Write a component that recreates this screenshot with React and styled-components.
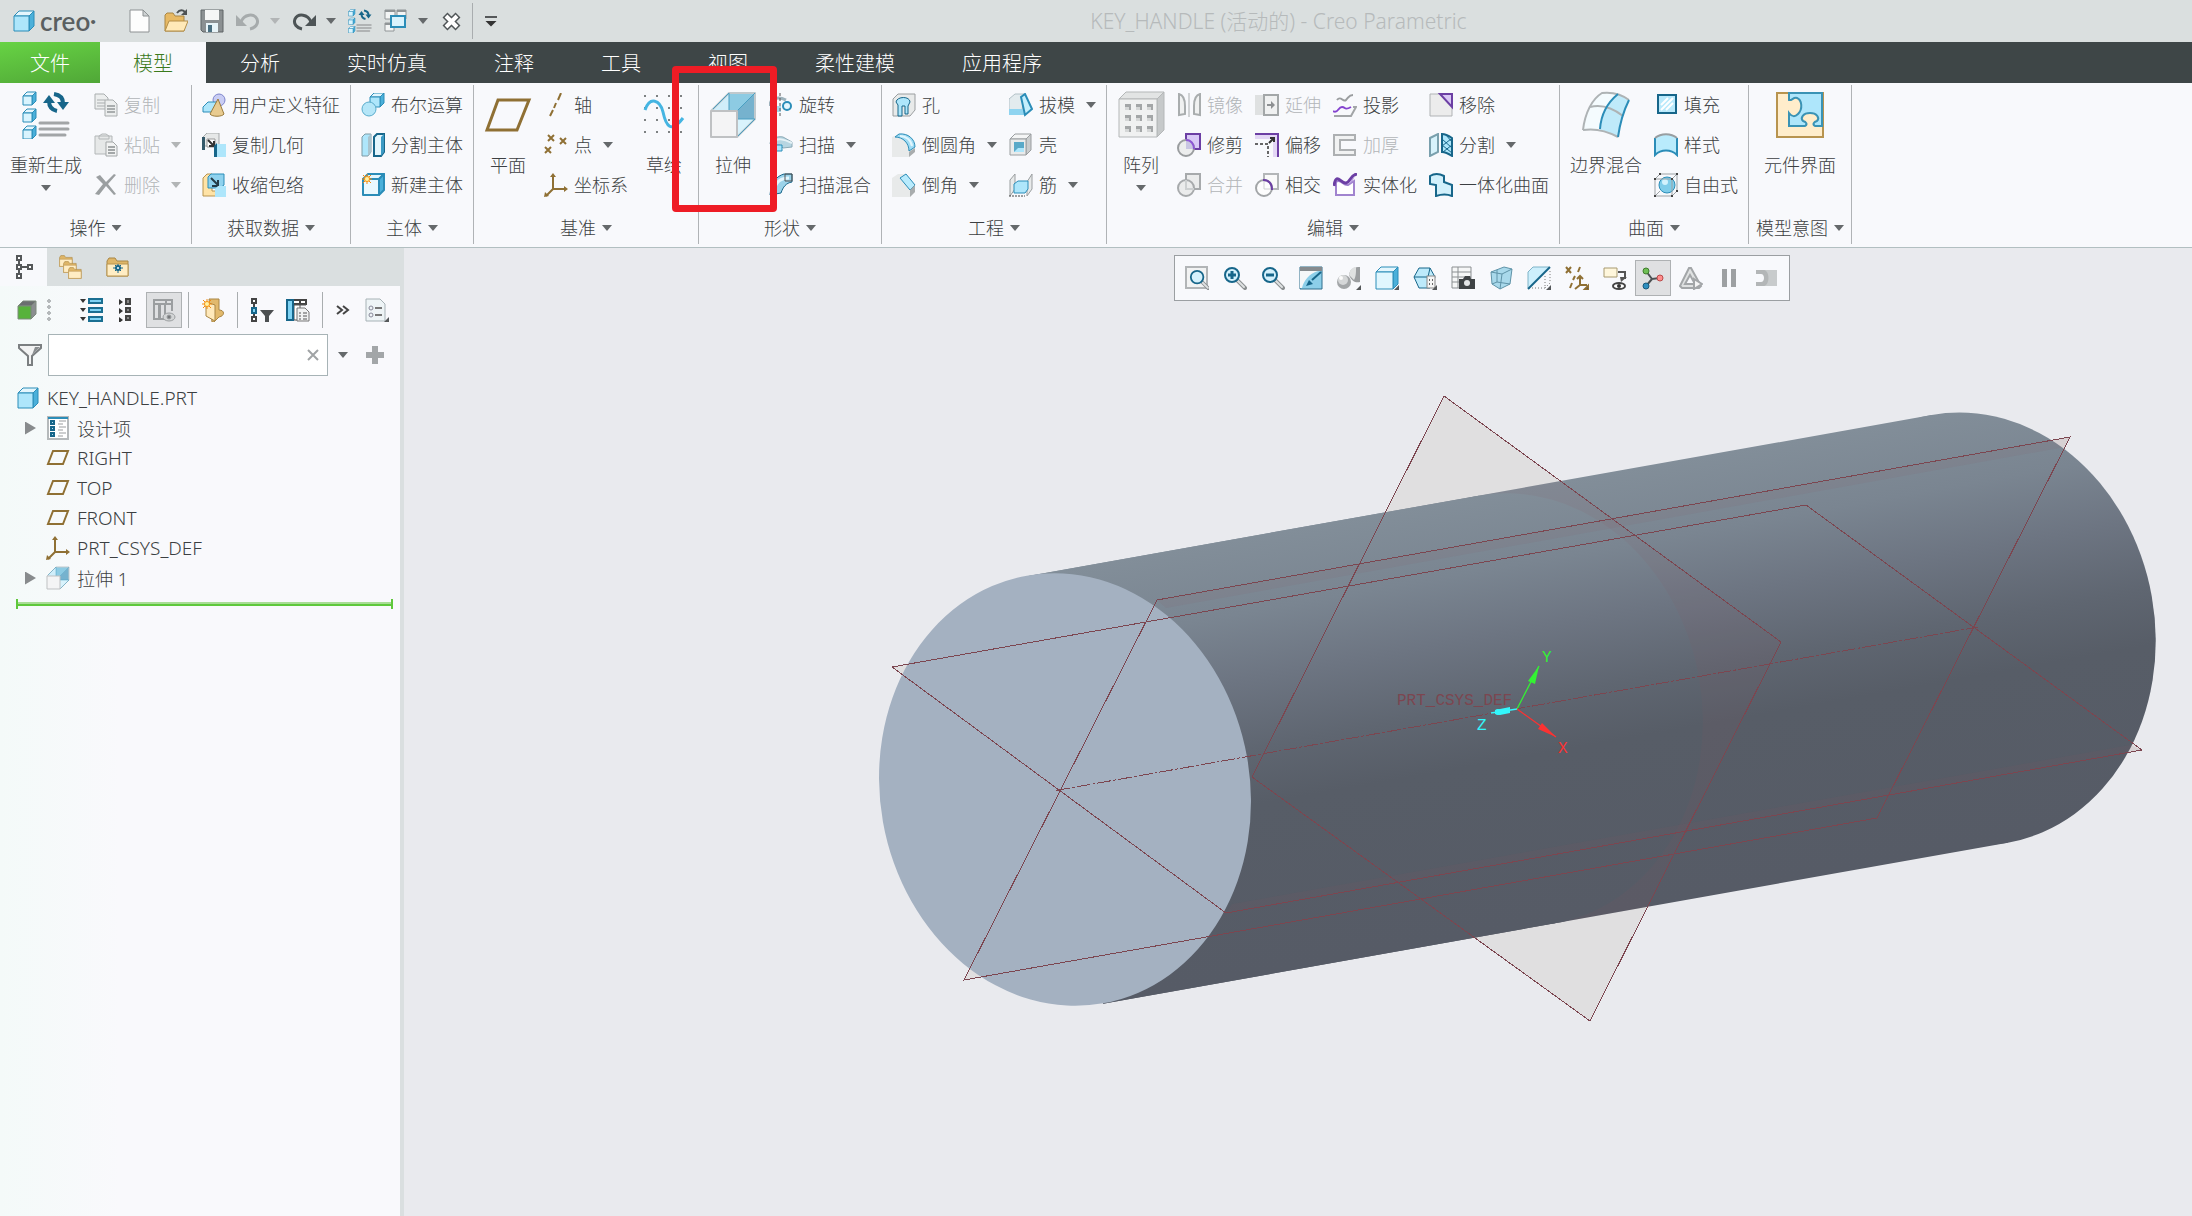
import styled, { createGlobalStyle, css } from "styled-components"
import { useState } from "react"

const GlobalStyle = createGlobalStyle`
    * {
        box-sizing: border-box;
    }
    body {
        margin: 0;
        font-family: "Noto Sans", "Noto Sans CJK SC", sans-serif;
        font-weight: 300;
        font-size: 18px;
        color: #3c3f42;
        background: #e9eaee;
    }
    button, input {
        font: inherit;
        color: inherit;
    }
    ul {
        list-style: none;
        margin: 0;
        padding: 0;
    }
`

/* ---------- drawing helpers ---------- */

const BLUE = "#2b8db8"
const DEEP = "#17668a"
const CYAN = "#aee6fb"
const PALE = "#e4f6fd"
const GOLD = "#8f7034"
const GREY = "#9a9ea0"
const SOFT = "#e8eaea"
const PURPLE = "#6c3fa4"

function Cube({ x, y, s, d, front = CYAN, top = PALE, side = "#4bb0da", line = BLUE, w = 1 }) {
    return (
        <g stroke={line} strokeWidth={w} strokeLinejoin="round">
            <path d={`M${x} ${y + d}l${d}-${d}h${s}l-${d} ${d}z`} fill={top} />
            <path d={`M${x + s} ${y + d}l${d}-${d}v${s}l-${d} ${d}z`} fill={side} />
            <rect x={x} y={y + d} width={s} height={s} fill={front} />
        </g>
    )
}

function Magnifier({ children }) {
    return (
        <g>
            <path d="M14 14l8 8" stroke="#8b8f91" strokeWidth="4" strokeLinecap="round" />
            <path d="M15 15l6 6" stroke="#dfe2e3" strokeWidth="2" strokeLinecap="round" />
            <circle cx="9" cy="9" r="7" fill="#d5f1fc" stroke={DEEP} strokeWidth="2" />
            {children}
        </g>
    )
}

function Regen() {
    return (
        <g>
            {[1, 18, 35].map(y => <Cube key={y} x={1} y={y} s={9} d={4} front="#d9f4fe" />)}
            <g fill="none" stroke={DEEP} strokeWidth="4">
                <path d="M27 10c0 6 3 9 8 10" />
                <path d="M41 12c0-5-3-8-9-9" />
            </g>
            <path d="M21 12l6-8 6 8zM35 11h12l-6 8z" fill={DEEP} />
            <path d="M18 32h28M18 38h28M18 44h25" stroke="#a2a5a7" strokeWidth="3" strokeLinecap="round" />
        </g>
    )
}

function Extrude() {
    return (
        <g strokeLinejoin="round">
            <path d="M20 2h26L28 20h-8z" fill="#8dcbe3" />
            <path d="M2 20L20 2v18z" fill="#d0eefa" />
            <path d="M46 2v26H28V20z" fill="#76b2ce" />
            <path d="M28 28h18L28 46z" fill="#d9f3fc" />
            <path d="M2 20L20 2h26v26L28 46" fill="none" stroke="#c0c9cd" strokeWidth="2" />
            <path d="M46 2L28 20M20 2v18M4 18L20 2M28 28h18L28 46" fill="none" stroke="#4a9fc2" />
            <rect x="2" y="20" width="26" height="26" fill="#f4f4f5" stroke="#bfc1c3" strokeWidth="2" />
        </g>
    )
}

const Csys = () => (
    <g fill="none" stroke={GOLD} strokeWidth="2">
        <path d="M9 2v14h13M9 16l-7 7" />
        <path d="M9 0l-3 4h6zM24 16l-4-3v6zM0 24l5-1-4-4z" fill={GOLD} stroke="none" />
    </g>
)

const NewStar = () => (
    <g>
        <path d="M6 1v10M1 6h10M2 2l8 8M10 2l-8 8" stroke="#f28a12" strokeWidth="1" />
        <circle cx="6" cy="6" r="3" fill="#f79a1c" />
        <circle cx="6" cy="6" r="2" fill="#fff3a8" />
    </g>
)

const Folder = ({ x = 0, y = 0, s = 1 }) => (
    <g transform={`translate(${x} ${y}) scale(${s})`}>
        <path d="M1 4l2-3h6l2 3h11v15H1z" fill="#dfb668" stroke="#a98645" />
        <path d="M1 7h21v12H1z" fill="#ffedc4" stroke="#b8944f" />
    </g>
)

const SmallArrow = () => <path d="M24 19v5h-5z" fill="#55585a" />

// every drawing sits in a 24 box unless it is listed in BIG
const ICONS = {
    part: <Cube x={2} y={2} s={15} d={5} />,
    file: (
        <g stroke="#8d9193">
            <path d="M2 1h13l6 6v16H2z" fill="#fdfdfd" />
            <path d="M15 1v6h6z" fill="#cfd3d4" />
        </g>
    ),
    open: (
        <g>
            <path d="M1 6l2-2h6l2 3h9v15H1z" fill="#e7b964" stroke="#a98645" />
            <path d="M1 22l4-10h19l-4 10z" fill="#ffe9b8" stroke="#b38e48" />
            <path d="M13 4c3-4 6-3 8-1" fill="none" stroke="#4e5355" strokeWidth="2" />
            <path d="M23 0v6h-6z" fill="#4e5355" />
        </g>
    ),
    save: (
        <g>
            <path d="M1 1h22v22H3l-2-2z" fill="#8b9092" stroke="#5f6466" />
            <rect x="5" y="1" width="14" height="10" fill="#f5f6f6" />
            <rect x="6" y="14" width="12" height="9" fill="#e8f4f8" />
            <rect x="8" y="16" width="4" height="7" fill="#4a6f80" />
        </g>
    ),
    undo: (
        <g>
            <path d="M5 13c3-8 13-9 16-3 2 5-2 9-7 10" fill="none" stroke="#a6abac" strokeWidth="3" />
            <path d="M0 6v11h11z" fill="#a6abac" />
        </g>
    ),
    redo: (
        <g>
            <path d="M19 13C16 5 6 4 3 10c-2 5 2 9 7 10" fill="none" stroke="#4d5456" strokeWidth="3" />
            <path d="M24 6v11H13z" fill="#4d5456" />
        </g>
    ),
    regen: <g transform="scale(.5)"><Regen /></g>,
    windows: (
        <g fill="#f3f5f5" stroke="#909597">
            <path d="M1 1h10v9H1zM13 1h9v9h-9zM1 14h9v8H1z" />
            <path d="M1 2h10M13 2h9M1 15h9" strokeWidth="2" />
            <rect x="7" y="7" width="14" height="11" fill="#d9f3fd" stroke={BLUE} strokeWidth="2" />
        </g>
    ),
    close: (
        <g fill="none">
            <path d="M5 6l13 13M18 6L5 19" stroke="#4f5557" strokeWidth="7" />
            <path d="M6 7l11 11M17 7L6 18" stroke="#fff" strokeWidth="4" />
        </g>
    ),
    copy: (
        <g fill="#eceeee" stroke="#a9adae">
            <path d="M1 1h9l4 4v11H1z" />
            <path d="M3 7h8M3 10h8M3 13h8" />
            <path d="M11 7h8l4 4v12H11z" />
            <path d="M13 13h8M13 16h8M13 19h8" strokeWidth="2" />
        </g>
    ),
    paste: (
        <g fill="#e6e8e8" stroke="#b3b7b8">
            <path d="M1 3h17v18H1zM5 3l3-2h4l3 2v3H5z" />
            <path d="M12 9h7l4 4v10H12z" fill="#f2f3f3" stroke="#a3a7a8" />
            <path d="M14 14h7M14 17h7M14 20h7" stroke="#a3a7a8" strokeWidth="2" />
        </g>
    ),
    remove: <path d="M2 4l4-2 6 7 8-8 2 1-8 9 8 10-2 1-8-9-7 9-4-1 8-10z" fill="#9b9fa1" />,
    udf: (
        <g>
            <circle cx="17" cy="7" r="6" fill="#c9cdf4" stroke="#7d84cc" />
            <path d="M1 14l5-5h10v6l-5 4H1z" fill={CYAN} stroke={BLUE} />
            <path d="M16 6l6 15c-2 3-12 3-14 0z" fill="#e8cb90" stroke="#9a7b3c" />
        </g>
    ),
    copyGeom: (
        <g>
            <path d="M1 4l4-4h12v13H1z" fill="#e6e8e8" stroke="#a5a9aa" />
            <rect x="0" y="4" width="3" height="13" fill="#34596a" />
            <path d="M5 6h8v8H5z" fill="#fff" stroke="#999" />
            <path d="M6 7l5 5M12 8v5H7" stroke="#333" strokeWidth="2" fill="none" />
            <path d="M12 13l3-3v14h-3z" fill={DEEP} />
            <rect x="15" y="11" width="9" height="13" fill={CYAN} />
        </g>
    ),
    shrink: (
        <g>
            <path d="M1 5l4-4h5v17h5v5H1z" fill="#ffe3a6" stroke="#b8944f" />
            <path d="M6 4l3-3h13v11l-4 3H6z" fill="#8fd2ee" stroke={BLUE} />
            <path d="M9 5l7 7M16 7v6h-6" stroke="#243c48" strokeWidth="2" fill="none" />
            <path d="M13 16l3-3h8v11H13z" fill={CYAN} />
        </g>
    ),
    boolean: (
        <g>
            <Cube x={9} y={0} s={10} d={4} />
            <circle cx="8" cy="16" r="7" fill="#b5e6f8" stroke="#5aaccc" />
        </g>
    ),
    splitBody: (
        <g>
            <path d="M1 4l3-3h6v18l-3 4H1z" fill={CYAN} stroke="#7d9aa5" />
            <path d="M7 4l3-3v18l-3 4z" fill="#a9c4ce" />
            <path d="M13 4l3-3h7v18l-3 4h-7z" fill={PALE} stroke={DEEP} strokeWidth="2" />
            <path d="M20 4l3-3v18l-3 4z" fill="#3c9ac4" />
        </g>
    ),
    newBody: <g><Cube x={2} y={1} s={16} d={5} front="#e9f8fe" w={2} /><NewStar /></g>,
    axis: <path d="M17 0l-3 7M12 10l-2 5M9 17l-3 6" stroke={GOLD} strokeWidth="2" />,
    point: (
        <path d="M4 2l6 6M10 2L4 8M16 5l6 6M22 5l-6 6M1 14l6 6M7 14l-6 6" stroke={GOLD} strokeWidth="2" />
    ),
    csys: <Csys />,
    revolve: (
        <g fill="none">
            <path d="M1 13c0-8 8-10 16-6" stroke="#9db2bc" strokeWidth="3" />
            <path d="M2 13h10v6H4z" fill="#a7d7ea" />
            <circle cx="18" cy="13" r="4" fill={PALE} stroke={BLUE} strokeWidth="2" />
            <path d="M11 0v24" stroke="#555" strokeDasharray="3 2" />
        </g>
    ),
    sweep: (
        <g>
            <path d="M1 11c0-6 8-8 13-7l9 5v5l-9 1-3-3H3z" fill="#b7d5e1" stroke="#8caab6" />
            <path d="M4 8c5-3 10-2 19 2" fill="none" stroke="#e6f2f6" strokeWidth="2" />
            <path d="M6 12h7v6H6z" fill={CYAN} stroke={BLUE} />
        </g>
    ),
    sweptBlend: (
        <g>
            <path d="M1 22C2 9 8 3 15 1h8v8c-6 1-9 5-11 11z" fill="#9cd3ea" stroke={DEEP} />
            <path d="M5 16C8 8 12 5 20 5" stroke={PALE} strokeWidth="3" fill="none" />
            <path d="M16 1h7v7h-7z" fill="none" stroke="#555" />
        </g>
    ),
    hole: (
        <g>
            <path d="M1 6l5-5h17v16l-5 6H1z" fill={SOFT} stroke={GREY} />
            <path d="M6 23V12L4 9c1-6 14-6 14 0l-2 4v8h-3v-8h-3v10z" fill={CYAN} stroke={DEEP} />
        </g>
    ),
    round: (
        <g>
            <path d="M0 4l7-3h7c6 2 8 8 8 12v6l-5 5H0z" fill={SOFT} />
            <path d="M7 1c9-1 16 5 16 13l-6 4C17 10 11 4 3 4z" fill="#9fdcf5" stroke={BLUE} />
            <path d="M8 3c6 0 11 4 12 10" fill="none" stroke="#e2f6fd" strokeWidth="2" />
            <path d="M17 19l6-4v4l-6 5z" fill="#a9adae" />
        </g>
    ),
    chamfer: (
        <g>
            <path d="M0 5l6-4h7l10 11v7l-5 5H0z" fill={SOFT} />
            <path d="M8 5l6-4 9 11-5 5z" fill="#b8ebfd" stroke={BLUE} />
            <path d="M18 17l5-5v7l-5 5z" fill="#a9adae" />
        </g>
    ),
    draft: (
        <g>
            <path d="M0 6l6-5h9l-2 17H0z" fill="#e3ebee" stroke="#b3c1c7" />
            <path d="M0 16h13l4 6H0z" fill="#8fd4f0" />
            <path d="M12 4l4-3 7 15-7 6z" fill="#c4eefc" stroke={BLUE} strokeWidth="2" />
        </g>
    ),
    shell: (
        <g>
            <Cube x={1} y={1} s={16} d={5} front="#e9ebeb" top="#f4f5f5" side="#c9cccd" line={GREY} />
            <rect x="5" y="9" width="10" height="10" fill="#59a9c8" />
            <path d="M5 19l4-4h6v4z" fill={CYAN} />
        </g>
    ),
    rib: (
        <g>
            <path d="M1 23V7l5-6v15zM18 23V9l5-8v15z" fill={SOFT} stroke={GREY} />
            <path d="M5 11l4-3h10v8l-3 4H5z" fill={CYAN} stroke={BLUE} />
            <path d="M0 23h16" stroke="#444" strokeDasharray="2 1" />
        </g>
    ),
    mirror: (
        <g fill="#f0f1f1" stroke="#a9adae" strokeWidth="2">
            <path d="M2 1c4 1 6 6 6 12v8l-6 1zM23 1c-4 1-6 6-6 12v8l6 1z" />
            <path d="M12 0v24" strokeWidth="1" />
        </g>
    ),
    trim: (
        <g>
            <rect x="9" y="1" width="14" height="15" fill="#d9c9f7" stroke={PURPLE} strokeWidth="2" />
            <circle cx="9" cy="15" r="8" fill="#eceded" stroke="#9a9d9f" strokeWidth="2" />
            <path d="M9 7c5 0 8 4 8 9H9z" fill="#c9c6e2" />
            <path d="M9 7c5 0 8 4 8 9" fill="none" stroke="#8d55d6" strokeWidth="2" />
        </g>
    ),
    merge: (
        <g fill="#ebecec" stroke="#a7aaac" strokeWidth="2">
            <rect x="9" y="1" width="14" height="15" />
            <circle cx="9" cy="15" r="8" />
            <path d="M9 7v9h8" stroke="#cdd0d1" fill="none" />
        </g>
    ),
    extend: (
        <g fill="#f0f1f1" stroke="#a3a7a8">
            <path d="M0 2h9v20H0z" fill="#dfe1e1" stroke="none" />
            <rect x="9" y="2" width="14" height="20" strokeWidth="2" />
            <path d="M12 12h5" strokeWidth="2" stroke="#8d9092" />
            <path d="M16 8l4 4-4 4z" fill="#8d9092" stroke="none" />
        </g>
    ),
    offset: (
        <g>
            <path d="M0 1h23v23h-5V6H0z" fill="#e3d7f5" />
            <path d="M0 1h23v23" fill="none" stroke={PURPLE} strokeWidth="2" />
            <path d="M0 11h13v13" fill="none" stroke="#666" strokeDasharray="3 2" strokeWidth="2" />
            <path d="M14 10l5-5M15 5h4v4" stroke="#333" strokeWidth="2" fill="none" />
        </g>
    ),
    intersect: (
        <g>
            <rect x="9" y="1" width="14" height="15" fill="#fafafa" stroke="#b3b6b8" strokeWidth="2" />
            <circle cx="9" cy="15" r="8" fill="#fdfdfd" stroke="#a2a5a7" strokeWidth="2" />
            <path d="M9 7v9h8" fill="none" stroke="#cfd1d2" />
            <path d="M8 7c6 0 9 4 9 10" fill="none" stroke={PURPLE} strokeWidth="2" />
        </g>
    ),
    project: (
        <g fill="none" strokeWidth="2">
            <path d="M4 7c4-5 6 3 9 0s3-5 7-5" stroke="#9a9d9f" />
            <path d="M20 14h3l-5 9H1" stroke="#a2a5a7" />
            <path d="M0 18c5 3 5-4 9-4s2 4 9 0" stroke="#8442cf" />
        </g>
    ),
    thicken: (
        <path d="M1 2h21v5H7v10h15v5H1z" fill="#f1f2f2" stroke="#adb0b2" strokeWidth="2" />
    ),
    solidify: (
        <g>
            <path d="M3 9c5-4 7 4 12 3l6-4v14H3z" fill="#fff" stroke="#a184cf" strokeWidth="2" />
            <path d="M1 13C3-2 8 11 13 10s4-8 11-9" fill="none" stroke={PURPLE} strokeWidth="3" />
            <path d="M22 3l-3 6-4 2z" fill="#b79adf" />
        </g>
    ),
    removeFace: (
        <g>
            <path d="M1 1h10l12 13v9H1z" fill="#ececec" stroke="#b0b3b5" />
            <path d="M11 1h12v13z" fill="#d9c7f5" stroke={PURPLE} strokeWidth="2" />
        </g>
    ),
    split: (
        <g>
            <path d="M1 5l8-4v18l-8 4z" fill="#d7f2fb" stroke="#7aa0ad" strokeWidth="2" />
            <path d="M13 1c4 0 7 2 10 4v18c-3-2-6-4-10-4z" fill={CYAN} stroke={DEEP} strokeWidth="2" />
            <path d="M13 6l10 9M13 12l10 8M22 6l-9 7M23 12l-9 7M17 2l6 7" stroke={DEEP} />
        </g>
    ),
    quilt: (
        <path d="M1 3c5-3 10-2 14 0v6l8 3v11c-5-2-10-2-16 0V12l-6-1z" fill="#d2f0fb" stroke={DEEP} strokeWidth="2" />
    ),
    fill: (
        <g>
            <rect x="4" y="2" width="18" height="18" fill="#b9e9fb" stroke={DEEP} strokeWidth="2" />
            <path d="M7 17L19 5M7 12l7-7M12 17l7-7" stroke="#fff" strokeWidth="2" />
        </g>
    ),
    style: (
        <g>
            <path d="M1 5c6-5 16-5 22 0v17c-6-6-16-6-22 0z" fill="#b9ebfc" />
            <path d="M1 5v17c6-6 16-6 22 0V5" fill="none" stroke={BLUE} strokeWidth="2" />
            <path d="M1 5c6-5 16-5 22 0" fill="none" stroke="#989ea1" strokeWidth="2" />
        </g>
    ),
    freestyle: (
        <g fill="none" stroke="#9da2a5">
            <path d="M1 6l5-5h17v17l-5 5H1z" />
            <circle cx="13" cy="12" r="8" fill="#7fcdea" stroke={BLUE} />
            <circle cx="11" cy="9" r="3" fill="#d2f2fd" stroke="none" />
            <path d="M1 6h17v17M18 6l5-5M1 23l5-5" />
            <path d="M0 5h2v2H0zM17 5h2v2h-2zM0 22h2v2H0zM17 22h2v2h-2zM5 0h2v2H5zM22 0h2v2h-2zM22 17h2v2h-2z" fill="#444" stroke="none" />
        </g>
    ),
    tree: (
        <g fill="#fff" stroke="#55585a" strokeWidth="2">
            <path d="M7 4v17M7 12h11" />
            <path d="M5 1h4v4H5zM5 10h4v4H5zM5 19h4v4H5zM16 10h4v4h-4z" />
        </g>
    ),
    folders: (
        <g>
            <Folder x={0} y={0} s={0.6} />
            <Folder x={4} y={6} s={0.6} />
            <Folder x={9} y={12} s={0.6} />
        </g>
    ),
    favorites: (
        <g>
            <Folder x={0} y={2} />
            <path d="M12 9v9M7 13h10M9 10l6 6M15 10l-6 6" stroke={DEEP} />
            <circle cx="12" cy="13" r="3" fill={DEEP} />
            <circle cx="12" cy="13" r="1" fill="#fff" />
        </g>
    ),
    greenCube: (
        <Cube x={2} y={3} s={13} d={5} front="#57b23b" top="#6b6e70" side="#8b8e90" line="#7d8a7d" />
    ),
    showList: (
        <g>
            <path d="M0 1h6l-3 4zM0 10h6l-3 4zM0 19h6l-3 4z" fill="#333" />
            <path d="M9 1h13v4H9zM9 10h13v4H9zM9 19h13v4H9z" fill="#7fd3f4" stroke="#1b6f92" strokeWidth="2" />
        </g>
    ),
    collapse: (
        <g>
            <path d="M3 1l4 3-4 3zM3 10l4 3-4 3zM3 19l4 3-4 3z" fill="#333" />
            <path d="M10 1h4v5h-4zM10 10h4v4h-4zM10 18h4v4h-4z" fill="#888" stroke="#444" strokeWidth="2" />
        </g>
    ),
    columns: (
        <g fill="none" stroke="#9b9ea0">
            <path d="M2 2h18v4H2zM2 6v15h5V6M8 6v15h5V6M20 6v7M14 2v4" strokeWidth="2" />
            <ellipse cx="17" cy="19" rx="6" ry="4" fill="#d3d5d6" />
            <circle cx="17" cy="19" r="2" fill="#77797b" />
        </g>
    ),
    newItem: (
        <g>
            <path d="M8 1h10v11c6 0 6 6 0 7l-5 5h-2z" fill="#e2b96c" stroke="#a98645" />
            <path d="M5 4l9 3v16l-9-5z" fill="#ffe9bb" stroke="#a98645" />
            <NewStar />
        </g>
    ),
    treeFilter: (
        <g>
            <path d="M4 4v17" stroke="#444" strokeWidth="2" />
            <path d="M2 1h4v4H2zM2 19h4v4H2z" fill="#fff" stroke="#444" strokeWidth="2" />
            <path d="M2 10h4v5H2z" fill="#7fd3f4" stroke={DEEP} strokeWidth="2" />
            <path d="M10 12h14l-5 6v6h-4v-6z" fill="#4c4f51" />
        </g>
    ),
    treeColumns: (
        <g>
            <path d="M1 2h19v4H1zM14 2v4" fill="#fff" stroke="#444" strokeWidth="2" />
            <path d="M8 7h6v15H8zM14 7h6" fill="#fff" stroke="#555" />
            <rect x="1" y="2" width="6" height="20" fill="#7fd3f4" stroke={DEEP} strokeWidth="2" />
            <path d="M11 10h8l4 4v9H11z" fill="#f1f2f2" stroke="#777" />
            <path d="M13 15h2M17 15h4M13 18h2M17 18h4M13 21h2M17 21h4" stroke="#555" />
        </g>
    ),
    more: <path d="M2 8l5 4-5 4M8 8l5 4-5 4" fill="none" stroke="#444" strokeWidth="2" />,
    report: (
        <g>
            <path d="M1 1h14l5 5v17H1z" fill="#eef4f6" stroke="#a7b2b6" />
            <circle cx="6" cy="10" r="2" fill="none" stroke="#889" />
            <circle cx="6" cy="17" r="2" fill="none" stroke="#889" />
            <path d="M10 10h7M10 17h7" stroke="#777" strokeWidth="2" />
            <SmallArrow />
        </g>
    ),
    funnel: (
        <g>
            <path d="M1 2h22v3l-9 8v9h-4v-9L1 5z" fill="#f2f3f3" stroke="#7b7f81" strokeWidth="2" />
            <path d="M14 12l8-8h-5z" fill="#8a8e90" />
        </g>
    ),
    plus: <path d="M9 3h6v6h6v6h-6v6H9v-6H3V9h6z" fill="#a3a6a8" />,
    designItems: (
        <g>
            <path d="M2 1h20v22H2z" fill="#fff" stroke="#b5b9bb" strokeWidth="2" />
            <path d="M2 2h20" stroke={BLUE} strokeWidth="2" />
            <path d="M5 5h3v3H5zM5 11h3v3H5zM5 17h3v3H5z" fill="#b4e3f5" stroke={DEEP} strokeWidth="2" />
            <path d="M13 5h7M12 8h5M13 11h7M12 14h5M13 17h7M12 20h5" stroke="#9a9d9f" />
        </g>
    ),
    datumPlane: <path d="M7 5h15l-5 13H2z" fill="none" stroke={GOLD} strokeWidth="2" />,
    extrude: <g transform="scale(.5)"><Extrude /></g>,
    refit: (
        <g>
            <path d="M1 1h21v21H1z" fill="#f2f3f3" stroke="#b2b5b7" strokeWidth="2" />
            <g transform="translate(4 3) scale(.9)"><Magnifier /></g>
        </g>
    ),
    zoomIn: <Magnifier><path d="M9 5v8M5 9h8" stroke={DEEP} strokeWidth="3" /></Magnifier>,
    zoomOut: <Magnifier><path d="M5 9h8" stroke={DEEP} strokeWidth="3" /></Magnifier>,
    repaint: (
        <g>
            <path d="M1 1h22v22H1z" fill="#8dcfe9" stroke="#2f6f8c" />
            <path d="M1 5h18C10 8 5 14 3 22H1z" fill="#f5f7f8" />
            <path d="M1 1h22v4H1z" fill="#858a8d" />
            <path d="M22 6l-9 8" stroke={DEEP} strokeWidth="2" />
            <path d="M7 20l3-6 4 4z" fill={DEEP} />
        </g>
    ),
    shading: (
        <g>
            <path d="M12 9c1-7 6-8 11-8v15c-4 1-8 0-11-7z" fill="#9b9ea0" />
            <path d="M12 9c1-7 5-8 7-8 0 6 0 9-2 13z" fill="#dfe1e1" />
            <circle cx="7" cy="16" r="7" fill="#a3a6a8" />
            <circle cx="6" cy="14" r="5" fill="#d5d7d8" />
            <circle cx="4" cy="12" r="2" fill="#fbfbfb" />
            <SmallArrow />
        </g>
    ),
    displayStyle: <g><Cube x={1} y={1} s={17} d={5} front="#e0f6fe" /><SmallArrow /></g>,
    savedViews: (
        <g>
            <path d="M1 11l5-9h11l5 9-5 11H6z" fill="#bdeafb" stroke={DEEP} />
            <path d="M1 11h14l2-9M15 11l2 9" stroke={DEEP} fill="none" />
            <rect x="14" y="10" width="8" height="12" fill="#f5f5f5" stroke="#888" />
            <path d="M16 14h1M16 18h1M19 14h1M19 18h1" stroke="#666" strokeWidth="2" />
            <SmallArrow />
        </g>
    ),
    viewManager: (
        <g>
            <path d="M1 1h19v21H1zM1 6h19M1 11h19M1 16h10M7 1v21" fill="#f6f7f7" stroke="#8b8f91" />
            <path d="M8 13h4l2-3h5l1 3h4v10H8z" fill="#3f4345" />
            <circle cx="16" cy="17" r="3" fill="#e4e6e7" />
        </g>
    ),
    perspective: (
        <g stroke="#5f93a8" fill="#a9d9eb">
            <path d="M2 6l13-5 8 2-2 15-10 5-8-5z" />
            <path d="M2 6l11 2 10-5M13 8l-2 15M8 4v12M8 16l13 2M8 16l-5 2" fill="none" />
        </g>
    ),
    section: (
        <g>
            <path d="M1 6l5-5h16L2 22H1z" fill="#cdeffc" />
            <path d="M1 22V6l5-5h16" fill="none" stroke="#7fb4c8" />
            <path d="M2 22h16V8M18 22l5-5V4" fill="none" stroke="#777" strokeDasharray="1 2" />
            <path d="M1 23L23 1" stroke={DEEP} strokeWidth="2" />
            <SmallArrow />
        </g>
    ),
    datumDisplay: (
        <g fill="none" stroke={GOLD} strokeWidth="2">
            <path d="M1 1l5 6M6 1L1 7M15 1l-2 5M10 10l-2 4M7 17l-2 5M15 10v9h7M15 19l-5 4M12 13l3-3 3 3" />
            <SmallArrow />
        </g>
    ),
    annotations: (
        <g>
            <path d="M1 2h13v9H1z" fill="#fff7dc" stroke="#a89a70" />
            <path d="M15 6h7v7" fill="none" stroke="#555" strokeWidth="2" />
            <path d="M17 11h7l-6 5z" fill="#555" />
            <ellipse cx="16" cy="20" rx="6" ry="3" fill="#fff" stroke="#444" strokeWidth="2" />
            <circle cx="16" cy="20" r="2" fill="#333" />
        </g>
    ),
    spin: (
        <g>
            <path d="M5 5l6 8 8-1M11 13l-6 7" fill="none" stroke="#4c5153" strokeWidth="2" />
            <circle cx="5" cy="5" r="3" fill="#6fbf55" stroke="#3f7d2d" />
            <circle cx="19" cy="12" r="3" fill="#ff8d8d" stroke="#b94a4a" />
            <circle cx="5" cy="20" r="3" fill="#2f90c0" stroke="#185b7d" />
        </g>
    ),
    simulate: (
        <g fill="#dfe1e1" stroke="#a3a6a8" strokeWidth="2">
            <path d="M12 2l10 18-2 2H3l-2-2 9-18zM11 9l-5 9h10z" fillRule="evenodd" />
            <path d="M15 13l8 5-8 5z" fill="#f5f5f5" />
        </g>
    ),
    pause: <path d="M5 3h5v18H5zM14 3h5v18h-5z" fill="#9da0a2" />,
    flow: (
        <g>
            <path d="M1 4h21v16H1c8 0 10-5 10-8S8 4 1 4z" fill="#c8cbcc" />
            <path d="M1 8h5c4 0 4 8 0 8H1v4h8c6-1 6-15 0-16H1z" fill="#b3b6b7" />
        </g>
    ),
}

const BIG = {
    regenBig: <Regen />,
    plane: <path d="M14 9h31L33 39H3z" fill="none" stroke={GOLD} strokeWidth="3" />,
    sketch: (
        <g>
            {[5, 17, 29, 41].map(y =>
                [5, 17, 29, 41].map(x => <circle key={x + "-" + y} cx={x} cy={y} r="1" fill="#55585a" />)
            )}
            <path d="M5 19c5-14 15-10 18 2 3 14 8 22 20 6" fill="none" stroke="#45b5e2" strokeWidth="3" />
        </g>
    ),
    extrudeBig: <Extrude />,
    pattern: (
        <g>
            <Cube x={2} y={1} s={38} d={7} front="#f0f1f1" top="#e2e4e4" side="#c6c9ca" line="#b4b7b8" />
            {[14, 25, 36].map(y =>
                [9, 20, 31].map(x => (
                    <g key={x + "-" + y}>
                        <rect x={x - 1} y={y - 1} width="6" height="6" fill="#a3a6a7" />
                        <rect x={x - 1} y={y + 2} width="4" height="3" fill="#d5d7d7" />
                    </g>
                ))
            )}
        </g>
    ),
    blend: (
        <g fill="none" strokeWidth="2">
            <path d="M1 39C3 22 10 8 20 2c9-1 19 1 27 7C42 19 37 32 36 46 26 40 14 37 1 39z" fill="#f4fbfe" />
            <path d="M36 3l11 6c-5 10-10 23-11 37-6-4-12-6-18-7 1-15 7-27 18-36z" fill="#bfeafa" />
            <path d="M1 39C3 22 10 8 20 2c9-1 19 1 27 7" stroke="#aeb3b5" />
            <path d="M8 16c12-3 24 2 33 9M1 39c13-2 24 1 35 7" stroke="#aeb3b5" />
            <path d="M36 3C25 12 19 24 18 38M47 9c-5 10-9 23-11 37" stroke={BLUE} />
        </g>
    ),
    puzzle: (
        <g strokeWidth="2">
            <path d="M1 2h46v44H1z" fill="#ffedcb" stroke="#b8944f" />
            <path d="M13 2h33v33h-7c-3-2-1-4 2-5 3-3 0-8-7-8s-10 5-7 8c3 1 5 3 2 5H13V22c3 4 6 4 9 1 5-5 4-14-1-16-4-1-5 3-8 2z" fill={CYAN} stroke="#3a93b5" />
        </g>
    ),
}

function Icon({ name }) {
    const big = name in BIG
    return (
        <Drawing $big={big} viewBox={big ? "0 0 48 48" : "0 0 24 24"} aria-hidden="true">
            {big ? BIG[name] : ICONS[name]}
        </Drawing>
    )
}

/* ---------- data ---------- */

const TABS = ["模型", "分析", "实时仿真", "注释", "工具", "视图", "柔性建模", "应用程序"]

const GROUPS = [
    {
        title: "操作",
        parts: [
            { big: "重新生成", icon: "regenBig", menu: true },
            { rows: [["copy", "复制", { off: true }], ["paste", "粘贴", { off: true, menu: true }], ["remove", "删除", { off: true, menu: true }]] },
        ],
    },
    {
        title: "获取数据",
        parts: [{ rows: [["udf", "用户定义特征"], ["copyGeom", "复制几何"], ["shrink", "收缩包络"]] }],
    },
    {
        title: "主体",
        parts: [{ rows: [["boolean", "布尔运算"], ["splitBody", "分割主体"], ["newBody", "新建主体"]] }],
    },
    {
        title: "基准",
        parts: [
            { big: "平面", icon: "plane" },
            { rows: [["axis", "轴"], ["point", "点", { menu: true }], ["csys", "坐标系"]] },
            { big: "草绘", icon: "sketch" },
        ],
    },
    {
        title: "形状",
        parts: [
            { big: "拉伸", icon: "extrudeBig", marked: true },
            { rows: [["revolve", "旋转"], ["sweep", "扫描", { menu: true }], ["sweptBlend", "扫描混合"]] },
        ],
    },
    {
        title: "工程",
        parts: [
            { rows: [["hole", "孔"], ["round", "倒圆角", { menu: true }], ["chamfer", "倒角", { menu: true }]] },
            { rows: [["draft", "拔模", { menu: true }], ["shell", "壳"], ["rib", "筋", { menu: true }]] },
        ],
    },
    {
        title: "编辑",
        parts: [
            { big: "阵列", icon: "pattern", menu: true },
            { rows: [["mirror", "镜像", { off: true }], ["trim", "修剪"], ["merge", "合并", { off: true }]] },
            { rows: [["extend", "延伸", { off: true }], ["offset", "偏移"], ["intersect", "相交"]] },
            { rows: [["project", "投影"], ["thicken", "加厚", { off: true }], ["solidify", "实体化"]] },
            { rows: [["removeFace", "移除"], ["split", "分割", { menu: true }], ["quilt", "一体化曲面"]] },
        ],
    },
    {
        title: "曲面",
        parts: [
            { big: "边界混合", icon: "blend" },
            { rows: [["fill", "填充"], ["style", "样式"], ["freestyle", "自由式"]] },
        ],
    },
    {
        title: "模型意图",
        parts: [{ big: "元件界面", icon: "puzzle" }],
    },
]

const TREE = [
    { icon: "designItems", name: "设计项", closed: true },
    { icon: "datumPlane", name: "RIGHT", latin: true },
    { icon: "datumPlane", name: "TOP", latin: true },
    { icon: "datumPlane", name: "FRONT", latin: true },
    { icon: "csys", name: "PRT_CSYS_DEF", latin: true },
    { icon: "extrude", name: "拉伸 1", closed: true },
]

const VIEW_TOOLS = [
    ["refit", "重新调整"], ["zoomIn", "放大"], ["zoomOut", "缩小"], ["repaint", "重画"],
    ["shading", "渲染选项"], ["displayStyle", "显示样式"], ["savedViews", "已保存方向"],
    ["viewManager", "视图管理器"], ["perspective", "透视图"], ["section", "截面"],
    ["datumDisplay", "基准显示过滤器"], ["annotations", "注释显示"], ["spin", "旋转中心"],
    ["simulate", "仿真"], ["pause", "暂停"], ["flow", "流动"],
]

/* ---------- components ---------- */

function TitleBar() {
    return (
        <Header>
            <Brand><Icon name="part" />creo<sup>•</sup></Brand>
            <QuickTools>
                <ToolButton aria-label="新建"><Icon name="file" /></ToolButton>
                <ToolButton aria-label="打开"><Icon name="open" /></ToolButton>
                <ToolButton aria-label="保存"><Icon name="save" /></ToolButton>
                <ToolButton aria-label="撤消" disabled><Icon name="undo" /><Caret $off /></ToolButton>
                <ToolButton aria-label="重做"><Icon name="redo" /><Caret /></ToolButton>
                <ToolButton aria-label="重新生成"><Icon name="regen" /></ToolButton>
                <ToolButton aria-label="窗口"><Icon name="windows" /><Caret /></ToolButton>
                <ToolButton aria-label="关闭"><Icon name="close" /></ToolButton>
            </QuickTools>
            <Divider />
            <OverflowButton aria-label="自定义快速访问工具栏"><Caret /></OverflowButton>
            <WindowTitle>KEY_HANDLE (活动的) - Creo Parametric</WindowTitle>
        </Header>
    )
}

function Ribbon() {
    return (
        <RibbonBar>
            {GROUPS.map(group => (
                <Group key={group.title}>
                    <GroupBody>
                        {group.parts.map((part, i) => part.big ? (
                            <BigButton key={i}>
                                <Icon name={part.icon} />
                                <span>{part.big}</span>
                                {part.menu && <Caret />}
                                {part.marked && <Marker />}
                            </BigButton>
                        ) : (
                            <Column key={i}>
                                {part.rows.map(([icon, text, opts = {}]) => (
                                    <RowButton key={text} disabled={opts.off}>
                                        <Icon name={icon} />
                                        <span>{text}</span>
                                        {opts.menu && <Caret $off={opts.off} />}
                                    </RowButton>
                                ))}
                            </Column>
                        ))}
                    </GroupBody>
                    <GroupTitle>{group.title}<Caret /></GroupTitle>
                </Group>
            ))}
        </RibbonBar>
    )
}

function ModelTree() {
    const [search, setSearch] = useState("")

    return (
        <Side>
            <SideTabs>
                <SideTab $active aria-label="模型树"><Icon name="tree" /></SideTab>
                <SideTab aria-label="文件夹浏览器"><Icon name="folders" /></SideTab>
                <SideTab aria-label="收藏夹"><Icon name="favorites" /></SideTab>
            </SideTabs>
            <SideBody>
                <SideTools>
                    <ToolButton aria-label="模型"><Icon name="greenCube" /></ToolButton>
                    <Grip />
                    <ToolButton aria-label="全部展开"><Icon name="showList" /></ToolButton>
                    <ToolButton aria-label="全部收缩"><Icon name="collapse" /></ToolButton>
                    <ToolButton $pressed aria-label="树列"><Icon name="columns" /></ToolButton>
                    <Divider />
                    <ToolButton aria-label="新建项"><Icon name="newItem" /></ToolButton>
                    <Divider />
                    <ToolButton aria-label="树过滤器"><Icon name="treeFilter" /></ToolButton>
                    <ToolButton aria-label="树列设置"><Icon name="treeColumns" /></ToolButton>
                    <Divider />
                    <MoreButton aria-label="更多"><Icon name="more" /></MoreButton>
                    <ToolButton aria-label="设置"><Icon name="report" /></ToolButton>
                </SideTools>
                <FilterRow>
                    <label htmlFor="tree-search" aria-label="搜索"><Icon name="funnel" /></label>
                    <SearchBox>
                        <input id="tree-search" value={search} onChange={e => setSearch(e.target.value)} />
                        <ClearButton aria-label="清除" onClick={() => setSearch("")}>
                            <svg width="12" height="12" viewBox="0 0 12 12">
                                <path d="M1 1l10 10M11 1L1 11" stroke="#a0a3a5" strokeWidth="2" />
                            </svg>
                        </ClearButton>
                    </SearchBox>
                    <ToolButton aria-label="搜索选项"><Caret /></ToolButton>
                    <ToolButton aria-label="添加"><Icon name="plus" /></ToolButton>
                </FilterRow>
                <TreeRoot><Icon name="part" />KEY_HANDLE.PRT</TreeRoot>
                <ul>
                    {TREE.map(node => (
                        <TreeItem key={node.name} $latin={node.latin}>
                            <Expander $shown={node.closed} />
                            <Icon name={node.icon} />
                            {node.name}
                        </TreeItem>
                    ))}
                </ul>
                <InsertLine />
            </SideBody>
        </Side>
    )
}

function Barrel({ length, fill = "url(#steel)" }) {
    return (
        <g transform="translate(1065 790) rotate(-10.1)" fill={fill}>
            <rect x="0" y="-217.2" width={length} height="434.4" />
            <ellipse cx={length} cy="0" rx="184.9" ry="217.2" />
        </g>
    )
}

function Scene() {
    return (
        <Canvas viewBox="404 248 1788 968" preserveAspectRatio="xMidYMid meet" role="img" aria-label="KEY_HANDLE">
            <defs>
                <linearGradient id="steel" gradientUnits="userSpaceOnUse" x1="0" y1="-217" x2="0" y2="217">
                    <stop offset="0" stopColor="#828e99" />
                    <stop offset=".17" stopColor="#7a8591" />
                    <stop offset=".32" stopColor="#6d7582" />
                    <stop offset=".48" stopColor="#5f6671" />
                    <stop offset=".61" stopColor="#575d67" />
                    <stop offset="1" stopColor="#565b66" />
                </linearGradient>
                <mask id="solid" maskUnits="userSpaceOnUse" x="404" y="248" width="1788" height="968">
                    <Barrel length={919} fill="#fff" />
                </mask>
            </defs>
            <g fill="#e0dfe0">
                <path d="M1444 396L1781 642L1590 1021L1252 777z" />
                <path d="M1157 600L2070 437L1877 818L964 980z" />
                <path d="M892 667L1806 505L2142 750L1226 913z" />
            </g>
            <Barrel length={919} />
            <path d="M1444 396L1781 642L1590 1021L1252 777z" fill="#8a5560" fillOpacity=".1" mask="url(#solid)" />
            <Barrel length={459} />
            <ellipse cx="1065" cy="789.5" rx="184.9" ry="217.2" transform="rotate(-10.1 1065 789.5)" fill="#a4b1c1" />
            <g fill="#8a5560" fillOpacity=".1">
                <path d="M1157 600L2070 437L2065 447L1166 608z" />
                <path d="M1226 913L2142 750L2130 745L1232 904z" />
            </g>
            <g fill="none" stroke="#7c4650" strokeWidth="1" shapeRendering="crispEdges">
                <path d="M1444 396L1781 642L1590 1021L1252 777z" />
                <path d="M1157 600L2070 437L1877 818L964 980z" />
                <path d="M892 667L1806 505L2142 750L1226 913z" />
                <path d="M1056 790.5L1978 627" strokeDasharray="14 2 3 2" />
            </g>
            <g strokeWidth="1.3">
                <path d="M1517 709L1539 666" stroke="#33f233" />
                <path d="M1539 666L1535 684L1528 681z" fill="#33f233" />
                <path d="M1517 709L1556 737" stroke="#fb3232" />
                <path d="M1556 737L1538 729L1542 723z" fill="#fb3232" />
                <path d="M1517 709L1491 713" stroke="#33f6fb" />
                <path d="M1510 707L1510 713L1500 715L1495 714L1495 710z" fill="#33f6fb" />
                <circle cx="1498" cy="712" r="3" fill="#33f6fb" />
            </g>
            <SceneText x="1397" y="705" fill="#7c4650">PRT_CSYS_DEF</SceneText>
            <SceneText x="1542" y="662" fill="#33f233">Y</SceneText>
            <SceneText x="1558" y="753" fill="#fb3232">X</SceneText>
            <SceneText x="1477" y="730" fill="#33f6fb">Z</SceneText>
        </Canvas>
    )
}

export default function App() {
    const [tab, setTab] = useState("模型")

    return (
        <>
            <GlobalStyle />
            <Window>
                <TitleBar />
                <Tabs>
                    <FileTab>文件</FileTab>
                    {TABS.map(name => (
                        <Tab key={name} $active={name === tab} onClick={() => setTab(name)}>{name}</Tab>
                    ))}
                </Tabs>
                <Ribbon />
                <Workspace>
                    <ModelTree />
                    <Viewport>
                        <Scene />
                        <ViewBar>
                            {VIEW_TOOLS.map(([icon, name]) => (
                                <ToolButton key={icon} $pressed={icon === "spin"} aria-label={name}>
                                    <Icon name={icon} />
                                </ToolButton>
                            ))}
                        </ViewBar>
                    </Viewport>
                </Workspace>
            </Window>
        </>
    )
}

/* ---------- styles ---------- */

const plainButton = css`
    border: 0;
    padding: 0;
    background: none;
    cursor: pointer;
    display: flex;
    align-items: center;
    white-space: nowrap;
    &:disabled {
        color: #b2b5b8;
        cursor: default;
    }
`

const Drawing = styled.svg`
    display: block;
    flex: none;
    width: ${p => p.$big ? 48 : 24}px;
    height: ${p => p.$big ? 48 : 24}px;
`

const Caret = styled.i`
    flex: none;
    width: 10px;
    height: 6px;
    background: ${p => p.$off ? "#b2b5b6" : "#65696b"};
    clip-path: polygon(0 0, 100% 0, 50% 100%);
`

const Window = styled.div`
    display: flex;
    flex-direction: column;
    height: 100vh;
`

const Header = styled.header`
    display: flex;
    align-items: center;
    height: 42px;
    padding: 0 12px;
    background: #dadfdf;
`

const Brand = styled.div`
    display: flex;
    align-items: center;
    gap: 4px;
    width: 116px;
    font-family: Lato, sans-serif;
    font-size: 26px;
    font-weight: 600;
    line-height: 40px;
    color: #5a5f61;
    sup {
        margin-left: -4px;
        font-size: 10px;
        line-height: 1;
    }
`

const QuickTools = styled.div`
    display: flex;
    align-items: center;
    gap: 12px;
    margin-right: 8px;
`

const ToolButton = styled.button`
    ${plainButton}
    gap: 10px;
    ${p => p.$pressed && css`
        padding: 5px;
        margin: 0 -5px;
        background: #dfe0e2;
        outline: 1px solid #aeb1b3;
    `}
`

const OverflowButton = styled.button`
    ${plainButton}
    margin-left: 12px;
    padding-top: 3px;
    border-top: 2px solid #55585a;
    ${Caret} {
        width: 12px;
        background: #333;
    }
`

const Divider = styled.i`
    width: 1px;
    height: 36px;
    background: #a9adaf;
`

const WindowTitle = styled.div`
    flex: 1;
    padding-right: 120px;
    text-align: center;
    font-size: 21px;
    line-height: 40px;
    color: #b6babb;
`

const Tabs = styled.nav`
    display: flex;
    gap: 1px;
    height: 41px;
    background: #3e4647;
`

const Tab = styled.button`
    ${plainButton}
    padding: 0 33px;
    font-size: 20px;
    color: ${p => p.$active ? "#3b7a1c" : "#fff"};
    background: ${p => p.$active ? "#f8f9fc" : "none"};
`

const FileTab = styled(Tab)`
    padding: 0 30px;
    margin-right: -1px;
    background: linear-gradient(170deg, #67d344, #50a737);
`

const RibbonBar = styled.div`
    display: flex;
    height: 165px;
    padding: 2px 0 3px;
    background: #f8f9fc;
    border-bottom: 1px solid #b2bfc1;
`

const Group = styled.section`
    display: flex;
    flex-direction: column;
    border-right: 1px solid #b0b3b6;
`

const GroupBody = styled.div`
    flex: 1;
    display: flex;
    justify-content: center;
    gap: 12px;
    padding: 0 10px;
`

const GroupTitle = styled.div`
    display: flex;
    align-items: center;
    justify-content: center;
    gap: 6px;
    padding: 0 7px;
    line-height: 32px;
`

const Column = styled.div`
    display: flex;
    flex-direction: column;
`

const RowButton = styled.button`
    ${plainButton}
    gap: 6px;
    height: 40px;
    line-height: 24px;
    ${Caret} {
        margin-left: 5px;
    }
`

const BigButton = styled.button`
    ${plainButton}
    position: relative;
    flex-direction: column;
    min-width: 48px;
    padding-top: 6px;
    span {
        margin-top: 14px;
        line-height: 24px;
    }
    ${Caret} {
        margin-top: 8px;
    }
`

const Marker = styled.i`
    position: absolute;
    z-index: 2;
    top: -19px;
    left: -37px;
    width: 105px;
    height: 146px;
    border: 7px solid #ee1c25;
    border-radius: 4px;
    pointer-events: none;
`

const Workspace = styled.main`
    flex: 1;
    min-height: 0;
    display: flex;
`

const Side = styled.aside`
    display: flex;
    flex-direction: column;
    width: 404px;
    background: #dadfe0;
`

const SideTabs = styled.div`
    display: flex;
    height: 38px;
`

const SideTab = styled.button`
    ${plainButton}
    justify-content: center;
    width: 47px;
    background: ${p => p.$active ? "#f8f9fc" : "none"};
`

const SideBody = styled.div`
    flex: 1;
    margin-right: 4px;
    background: linear-gradient(90deg, #f4faf9, #f9f9fc 30%, #f9f9fc);
`

const SideTools = styled.div`
    display: flex;
    align-items: center;
    gap: 12px;
    height: 48px;
    padding-left: 16px;
`

const MoreButton = styled(ToolButton)`
    width: 18px;
    overflow: hidden;
`

const Grip = styled.i`
    width: 4px;
    height: 24px;
    margin: 0 17px 0 -5px;
    background: radial-gradient(circle, #b5b9bb 2px, transparent 2px) 0 0 / 4px 6px;
`

const FilterRow = styled.div`
    display: flex;
    align-items: center;
    gap: 10px;
    padding: 0 13px 7px 18px;
    label {
        margin-right: -4px;
    }
    ${ToolButton}:last-child {
        margin-left: 5px;
    }
`

const SearchBox = styled.div`
    display: flex;
    flex: 1;
    min-width: 0;
    height: 42px;
    border: 1px solid #a7b3b6;
    background: #fff;
    input {
        flex: 1;
        min-width: 0;
        border: 0;
        padding: 0 8px;
        outline: 0;
        background: none;
    }
`

const ClearButton = styled.button`
    ${plainButton}
    padding: 0 8px;
`

const TreeRoot = styled.div`
    display: flex;
    align-items: center;
    gap: 7px;
    height: 30px;
    padding-left: 16px;
    font-size: 19px;
`

const TreeItem = styled.li`
    display: flex;
    align-items: center;
    gap: 7px;
    height: 30px;
    padding-left: 25px;
    font-size: ${p => p.$latin ? 19 : 18}px;
`

const Expander = styled.i`
    width: 11px;
    height: 13px;
    margin-right: 3px;
    background: ${p => p.$shown ? "#888b8d" : "none"};
    clip-path: polygon(0 0, 100% 50%, 0 100%);
`

const InsertLine = styled.div`
    height: 10px;
    margin: 6px 7px 0 16px;
    border: solid #5fc83c;
    border-width: 0 2px;
    background: linear-gradient(#a9dd96, #a9dd96) 0 3px / 100% 2px no-repeat,
        linear-gradient(#5fc83c, #5fc83c) 0 5px / 100% 2px no-repeat;
`

const Viewport = styled.section`
    position: relative;
    flex: 1;
    min-width: 0;
    background: #e9eaee;
`

const Canvas = styled.svg`
    display: block;
    width: 100%;
    height: 100%;
`

const SceneText = styled.text`
    font-family: "Liberation Mono", monospace;
    font-size: 16px;
`

const ViewBar = styled.div`
    position: absolute;
    top: 7px;
    right: 402px;
    display: flex;
    align-items: center;
    gap: 14px;
    height: 46px;
    padding: 0 10px;
    background: #f8f9fc;
    border: 1px solid #9b9fa2;
`
